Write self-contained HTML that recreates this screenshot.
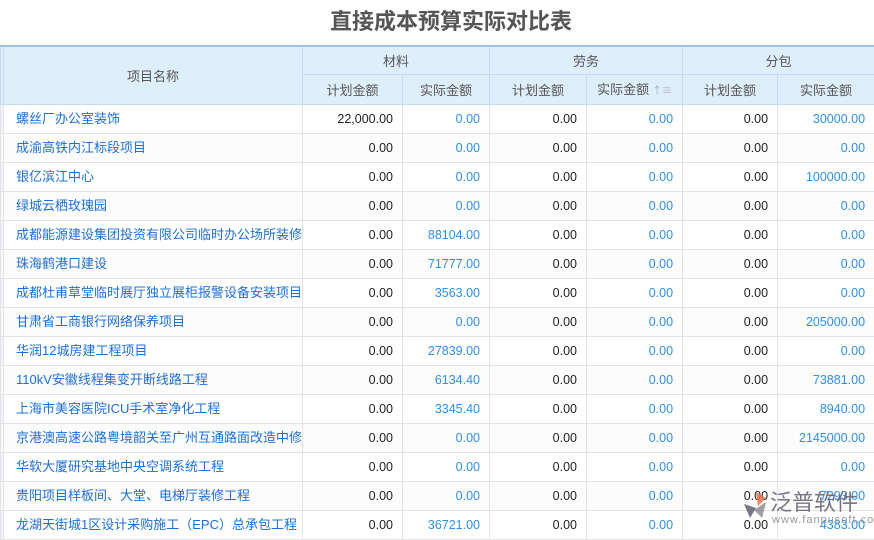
<!DOCTYPE html><html><head><meta charset="utf-8"><style>
body{margin:0;width:874px;height:535px;overflow:hidden;background:#fff;font-family:"Liberation Sans","Noto Sans CJK SC",sans-serif;position:relative}
h1{margin:0;position:absolute;top:5px;left:0;width:902px;text-align:center;font-size:22px;line-height:30px;color:#555;font-weight:bold;font-family:"Noto Sans CJK SC",sans-serif}
table{position:absolute;top:45px;left:0;width:874px;border-collapse:collapse;table-layout:fixed;font-size:12.5px}
th{background:#dfeefb;color:#555;font-weight:normal;border:1px solid #c5dbef;height:28px;line-height:28px;padding:0;font-family:"Noto Sans CJK SC",sans-serif;overflow:hidden;font-size:13px}
tr.h1 th{border-top:2px solid #9cc3e6;height:27px;line-height:27px}
td{border:1px solid #e3e3e3;height:28px;line-height:28px;padding:0 9px;text-align:right;color:#222;white-space:nowrap;overflow:hidden}
td.n{text-align:left;color:#1e6fd6;padding-left:12px;padding-right:0;text-overflow:clip;font-size:13px}
td.b{color:#2f8fe6}
td.s{padding:0;background:#eef4fa}
tr:nth-child(even) td{background:#fcfcfc}
.wm{position:absolute;left:770px;top:486px;font-size:22px;color:#556;opacity:.8;font-family:"Noto Sans CJK SC",sans-serif;line-height:30px}
.wm2{position:absolute;left:772px;top:514px;font-size:11px;color:#999;letter-spacing:1px}
</style></head><body>
<h1>直接成本预算实际对比表</h1>
<table>
<colgroup><col style="width:3px"><col style="width:299px"><col style="width:100px"><col style="width:87px"><col style="width:97px"><col style="width:96px"><col style="width:95px"><col style="width:97px"></colgroup>
<tr class="h1"><th rowspan="2"></th><th rowspan="2">项目名称</th><th colspan="2">材料</th><th colspan="2">劳务</th><th colspan="2">分包</th></tr>
<tr><th>计划金额</th><th>实际金额</th><th>计划金额</th><th>实际金额 <span style="color:#aab;font-size:10px">↑≡</span></th><th>计划金额</th><th>实际金额</th></tr>
<tr><td class="s"></td><td class="n">螺丝厂办公室装饰</td><td>22,000.00</td><td class="b">0.00</td><td>0.00</td><td class="b">0.00</td><td>0.00</td><td class="b">30000.00</td></tr>
<tr><td class="s"></td><td class="n">成渝高铁内江标段项目</td><td>0.00</td><td class="b">0.00</td><td>0.00</td><td class="b">0.00</td><td>0.00</td><td class="b">0.00</td></tr>
<tr><td class="s"></td><td class="n">银亿滨江中心</td><td>0.00</td><td class="b">0.00</td><td>0.00</td><td class="b">0.00</td><td>0.00</td><td class="b">100000.00</td></tr>
<tr><td class="s"></td><td class="n">绿城云栖玫瑰园</td><td>0.00</td><td class="b">0.00</td><td>0.00</td><td class="b">0.00</td><td>0.00</td><td class="b">0.00</td></tr>
<tr><td class="s"></td><td class="n">成都能源建设集团投资有限公司临时办公场所装修工程</td><td>0.00</td><td class="b">88104.00</td><td>0.00</td><td class="b">0.00</td><td>0.00</td><td class="b">0.00</td></tr>
<tr><td class="s"></td><td class="n">珠海鹤港口建设</td><td>0.00</td><td class="b">71777.00</td><td>0.00</td><td class="b">0.00</td><td>0.00</td><td class="b">0.00</td></tr>
<tr><td class="s"></td><td class="n">成都杜甫草堂临时展厅独立展柜报警设备安装项目</td><td>0.00</td><td class="b">3563.00</td><td>0.00</td><td class="b">0.00</td><td>0.00</td><td class="b">0.00</td></tr>
<tr><td class="s"></td><td class="n">甘肃省工商银行网络保养项目</td><td>0.00</td><td class="b">0.00</td><td>0.00</td><td class="b">0.00</td><td>0.00</td><td class="b">205000.00</td></tr>
<tr><td class="s"></td><td class="n">华润12城房建工程项目</td><td>0.00</td><td class="b">27839.00</td><td>0.00</td><td class="b">0.00</td><td>0.00</td><td class="b">0.00</td></tr>
<tr><td class="s"></td><td class="n">110kV安徽线程集变开断线路工程</td><td>0.00</td><td class="b">6134.40</td><td>0.00</td><td class="b">0.00</td><td>0.00</td><td class="b">73881.00</td></tr>
<tr><td class="s"></td><td class="n">上海市美容医院ICU手术室净化工程</td><td>0.00</td><td class="b">3345.40</td><td>0.00</td><td class="b">0.00</td><td>0.00</td><td class="b">8940.00</td></tr>
<tr><td class="s"></td><td class="n">京港澳高速公路粤境韶关至广州互通路面改造中修工程</td><td>0.00</td><td class="b">0.00</td><td>0.00</td><td class="b">0.00</td><td>0.00</td><td class="b">2145000.00</td></tr>
<tr><td class="s"></td><td class="n">华软大厦研究基地中央空调系统工程</td><td>0.00</td><td class="b">0.00</td><td>0.00</td><td class="b">0.00</td><td>0.00</td><td class="b">0.00</td></tr>
<tr><td class="s"></td><td class="n">贵阳项目样板间、大堂、电梯厅装修工程</td><td>0.00</td><td class="b">0.00</td><td>0.00</td><td class="b">0.00</td><td>0.00</td><td class="b">7293.00</td></tr>
<tr><td class="s"></td><td class="n">龙湖天街城1区设计采购施工（EPC）总承包工程</td><td>0.00</td><td class="b">36721.00</td><td>0.00</td><td class="b">0.00</td><td>0.00</td><td class="b">4383.00</td></tr>
</table>
<svg style="position:absolute;left:742px;top:490px" width="26" height="30"><path d="M14 2 L24 8 L16 16 Z" fill="#e8744a" opacity=".85"/><path d="M2 14 L14 18 L8 28 Z" fill="#556" opacity=".8"/><path d="M12 20 L24 12 L20 28 Z" fill="#778" opacity=".7"/></svg>
<div class="wm">泛普软件</div>
<div class="wm2">www.fanpusoft.com</div>
</body></html>
